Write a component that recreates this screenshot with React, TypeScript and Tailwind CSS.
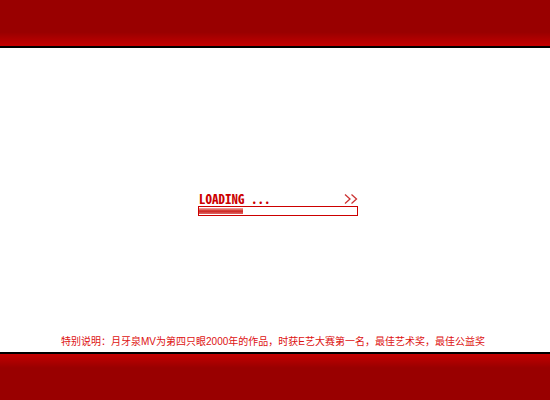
const progress = 28;

function Loader() {
  return (
    <section className="w-40 text-[#cc0000]">
      <div className="flex h-3.5 items-center justify-between pl-px">
        <span
          id="loading-label"
          className="whitespace-pre font-['Noto_Sans_Mono_CJK_SC','DejaVu_Sans_Mono',monospace] text-[13px] leading-4 font-bold"
        >
          LOADING ...
        </span>
        <svg aria-hidden="true" width="14" height="10" viewBox="0 0 14 10" fill="none" stroke="#cc3333" strokeWidth="1.3">
          <path d="M1 0.5 6 5 1 9.5M7.5 0.5 12.5 5 7.5 9.5" />
        </svg>
      </div>
      <div
        role="progressbar"
        aria-labelledby="loading-label"
        aria-valuemin={0}
        aria-valuemax={100}
        aria-valuenow={progress}
        className="h-2.5 border border-[#cc0000] bg-white pt-px"
      >
        <div
          className="h-1.5 bg-linear-to-b from-[#eeaaaa] via-[#cc1a1a] to-[#dd6666]"
          style={{ width: `${progress}%` }}
        />
      </div>
    </section>
  );
}

export default function App() {
  return (
    <div className="flex min-h-screen flex-col bg-white">
      <header className="h-12 border-b-2 border-black bg-linear-to-b from-[#990000] from-70% to-[#c40000]" />
      <main className="flex flex-1 flex-col items-center">
        <div className="flex flex-1 items-center pt-[26px] pl-1.5">
          <Loader />
        </div>
        <p className="pr-1 pb-0.5 font-['Liberation_Sans','Noto_Sans_CJK_SC',sans-serif] text-[10px] leading-4 whitespace-nowrap text-[#dd1111]">
          特别说明：月牙泉MV为第四只眼2000年的作品，时获E艺大赛第一名，最佳艺术奖，最佳公益奖
        </p>
      </main>
      <footer className="h-12 border-t-2 border-black bg-linear-to-b from-[#c40000] to-[#990000] to-30%" />
    </div>
  );
}
